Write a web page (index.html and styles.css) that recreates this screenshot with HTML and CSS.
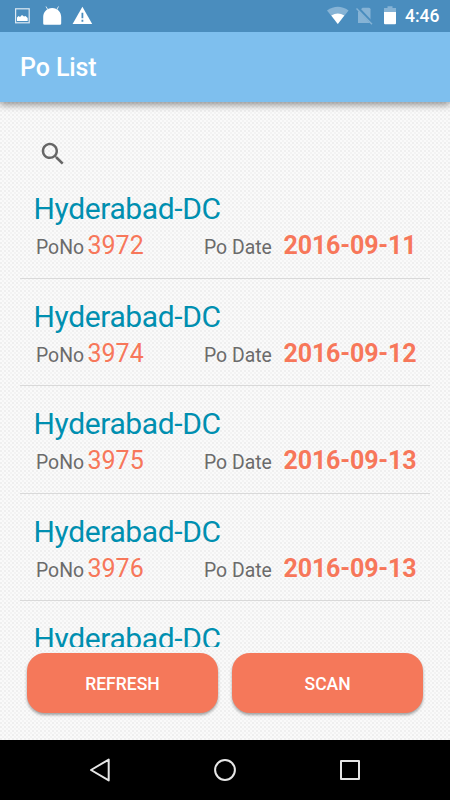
FILE: index.html
```html
<!DOCTYPE html>
<html lang="en">
<head>
  <meta charset="UTF-8">
  <meta name="viewport" content="width=device-width, initial-scale=1.0">
  <title>Po List</title>
  <link rel="stylesheet" href="styles.css">
</head>
<body>
  <div class="screen">
    <div class="status-bar">
      <svg class="status-icons" width="80" height="32" viewBox="0 0 80 32">
        <rect x="1.6" y="8.8" width="13.6" height="14" fill="none" stroke="#dce9f3" stroke-width="1.2"/>
        <path d="M3 21v-3.500l1.500-1.500 1.500 1 2-2 2 1.500 1.500-.5 2.200 2V21z" fill="#fff"/>
        <path d="M30.500 24.700q-1.300 0-1.300-1.300V17c0-5 3.700-9 9-9s9 4 9 9v6.400q0 1.300-1.300 1.300z" fill="#fff"/>
        <path d="M34 10l-2-3.500M42.500 10l2-3.500" stroke="#dce9f3" stroke-width="1"/>
        <path d="M68.400 6.800L78.200 24H58.600z" fill="#fff"/>
        <path d="M68.400 12.800v5.400M68.400 19.800v2" stroke="#4a8dbe" stroke-width="1.800"/>
      </svg>
      <div class="status-right">
        <svg width="72" height="32" viewBox="0 0 72 32">
          <path d="M0 10.500Q10.800 3 21.600 10.500L10.800 24z" fill="#86b3d5"/>
          <path d="M4.300 15.500Q10.800 11.500 17.300 15.500L10.800 24z" fill="#fff"/>
          <path d="M35.500 7.700H42q1.500 0 1.500 1.500V23H31V12z" fill="#86b3d5"/>
          <path d="M30.500 7.500l15.500 16.500" stroke="#4a8dbe" stroke-width="3"/>
          <path d="M29.500 8.500l15.500 15.800" stroke="#86b3d5" stroke-width="1.400"/>
          <path d="M57 12V8h3.500V6.200h5V8H69v4z" fill="#86b3d5"/>
          <path d="M57 12h12v11.200q0 1-1 1H58q-1 0-1-1z" fill="#fff"/>
        </svg>
        <span class="clock">4:46</span>
      </div>
    </div>

    <header class="toolbar">
      <h1>Po List</h1>
    </header>

    <main class="content">
      <div class="search">
        <svg width="30" height="30" viewBox="0 0 24 24">
          <path fill="#666" d="M15.500 14h-.79l-.28-.27C15.410 12.590 16 11.110 16 9.500 16 5.910 13.090 3 9.500 3S3 5.910 3 9.500 5.910 16 9.500 16c1.610 0 3.090-.59 4.230-1.570l.27.28v.79l5 4.990L20.490 19l-4.990-5zm-6 0C7.010 14 5 11.990 5 9.500S7.010 5 9.500 5 14 7.010 14 9.500 11.990 14 9.500 14z"/>
        </svg>
      </div>

      <div class="po-list">
        <div class="po-item">
          <h2>Hyderabad-DC</h2>
          <div class="po-row">
            <span class="label">PoNo</span>
            <span class="number">3972</span>
            <span class="label date-label">Po Date</span>
            <span class="date">2016-09-11</span>
          </div>
        </div>
        <div class="po-item">
          <h2>Hyderabad-DC</h2>
          <div class="po-row">
            <span class="label">PoNo</span>
            <span class="number">3974</span>
            <span class="label date-label">Po Date</span>
            <span class="date">2016-09-12</span>
          </div>
        </div>
        <div class="po-item">
          <h2>Hyderabad-DC</h2>
          <div class="po-row">
            <span class="label">PoNo</span>
            <span class="number">3975</span>
            <span class="label date-label">Po Date</span>
            <span class="date">2016-09-13</span>
          </div>
        </div>
        <div class="po-item">
          <h2>Hyderabad-DC</h2>
          <div class="po-row">
            <span class="label">PoNo</span>
            <span class="number">3976</span>
            <span class="label date-label">Po Date</span>
            <span class="date">2016-09-13</span>
          </div>
        </div>
        <div class="po-item">
          <h2>Hyderabad-DC</h2>
        </div>
      </div>

      <div class="actions">
        <button type="button">REFRESH</button>
        <button type="button">SCAN</button>
      </div>
    </main>

    <nav class="nav-bar">
      <svg width="24" height="26" viewBox="0 0 24 26">
        <path d="M3 13L20.700 2.600v20.800z" fill="none" stroke="#e6e6e6" stroke-width="2" stroke-linejoin="round"/>
      </svg>
      <svg width="24" height="26" viewBox="0 0 24 26">
        <circle cx="12" cy="13" r="9.900" fill="none" stroke="#e6e6e6" stroke-width="2"/>
      </svg>
      <svg width="24" height="26" viewBox="0 0 24 26">
        <rect x="3" y="4" width="18" height="18" fill="none" stroke="#e6e6e6" stroke-width="2" stroke-linejoin="round"/>
      </svg>
    </nav>
  </div>
</body>
</html>
```
FILE: styles.css
```css
* {
  margin: 0;
  padding: 0;
  box-sizing: border-box;
}
body {
  font-family: Roboto, sans-serif;
  background: #000;
}
.screen {
  width: 450px;
  height: 800px;
  display: flex;
  flex-direction: column;
  overflow: hidden;
}

/* Status bar */
.status-bar {
  height: 32px;
  flex-shrink: 0;
  display: flex;
  justify-content: space-between;
  padding: 0 10px 0 14px;
  background: #4a8dbe;
}
.status-right {
  display: flex;
}
.clock {
  width: 35px;
  margin-left: 6px;
  font-size: 17.5px;
  font-weight: 500;
  line-height: 33px;
  color: #fff;
}

/* Toolbar */
.toolbar {
  height: 70px;
  flex-shrink: 0;
  padding-left: 20px;
  background: #7ebfee;
  box-shadow: 0 3px 7px rgba(0, 0, 0, 0.4);
  clip-path: inset(0 0 -14px 0);
  z-index: 1;
}
.toolbar h1 {
  font-size: 25px;
  font-weight: 500;
  line-height: 71px;
  letter-spacing: -0.1px;
  color: #fff;
}

/* Content with woven background */
.content {
  flex: 1;
  min-height: 0;
  display: flex;
  flex-direction: column;
  padding: 0 20px;
  background-color: #fafafa;
  background-image:
    radial-gradient(circle at 1px 1px, #efefef 0.8px, transparent 1.5px),
    radial-gradient(circle at 3px 3px, #f3f3f3 0.8px, transparent 1.5px);
  background-size: 4px 4px;
}
.search {
  height: 69px;
  padding: 37px 0 0 17.5px;
}

/* List */
.po-list {
  height: 476px;
  overflow: hidden;
}
.po-item {
  height: 107.6px;
  padding: 19px 13.5px 0;
  border-bottom: 1px solid #d9d9d9;
}
.po-item h2 {
  font-size: 30px;
  font-weight: 400;
  line-height: 38px;
  letter-spacing: -0.38px;
  color: #008fb0;
}
.po-row {
  display: flex;
  align-items: baseline;
  padding-left: 2.5px;
  line-height: 36px;
}
.label {
  width: 51.5px;
  font-size: 19.4px;
  color: #6b6b6b;
}
.number {
  width: 116.5px;
  font-size: 25px;
  color: #f7775a;
}
.date-label {
  width: 79.5px;
}
.date {
  font-size: 25px;
  font-weight: 700;
  letter-spacing: -0.15px;
  color: #f7775a;
  white-space: nowrap;
}

/* Buttons */
.actions {
  display: flex;
  gap: 13.4px;
  padding: 6px 6.6px 0;
}
.actions button {
  flex: 1;
  height: 60px;
  border: none;
  border-radius: 18px;
  background: #f5785a;
  box-shadow: 0 2px 3px rgba(0, 0, 0, 0.35);
  font-family: inherit;
  font-size: 17.5px;
  font-weight: 500;
  line-height: 22px;
  padding-top: 1px;
  color: #fff;
}

/* Navigation bar */
.nav-bar {
  height: 60px;
  flex-shrink: 0;
  display: flex;
  justify-content: space-between;
  align-items: center;
  padding: 0 88px;
  background: #000;
}
```
